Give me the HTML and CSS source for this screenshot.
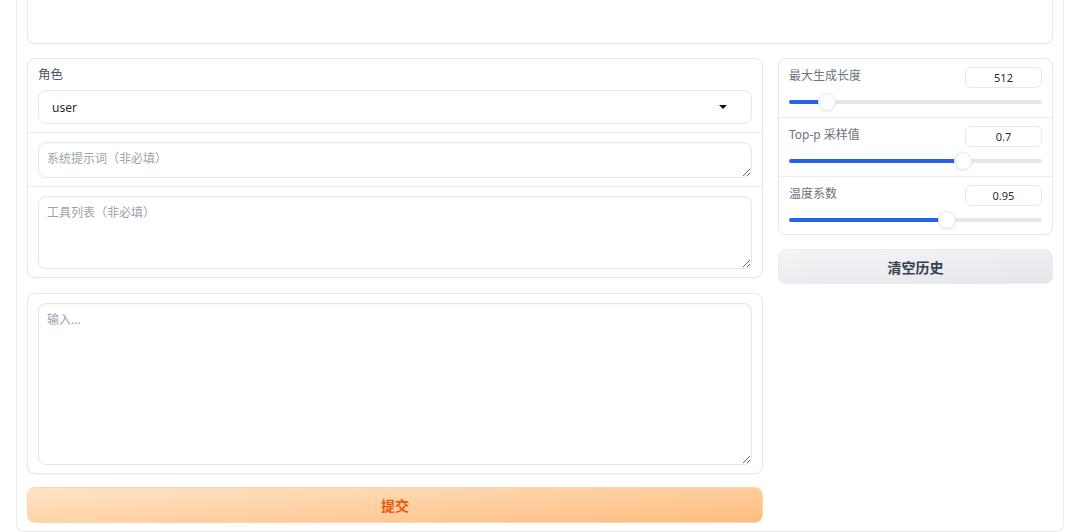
FILE: index.html
```html
<!DOCTYPE html>
<html lang="zh">
<head>
  <meta charset="UTF-8">
  <meta name="viewport" content="width=device-width, initial-scale=1.0">
  <title>Chat</title>
  <link rel="stylesheet" href="styles.css">
</head>
<body>
  <div class="app">
    <div class="chatbox"></div>

    <div class="row">
      <div class="left-col">
        <div class="card">
          <div class="section section-role">
            <span class="label">角色</span>
            <div class="select">
              <span>user</span>
              <span class="caret"></span>
            </div>
          </div>
          <div class="section">
            <textarea class="field field-system" placeholder="系统提示词（非必填）"></textarea>
          </div>
          <div class="section">
            <textarea class="field field-tools" placeholder="工具列表（非必填）"></textarea>
          </div>
        </div>

        <div class="card">
          <div class="section">
            <textarea class="field field-input" placeholder="输入..."></textarea>
          </div>
        </div>

        <button class="btn btn-submit">提交</button>
      </div>

      <div class="right-col">
        <div class="card">
          <div class="section slider-block">
            <div class="slider-head">
              <span class="label label-muted">最大生成长度</span>
              <span class="num">512</span>
            </div>
            <div class="slider">
              <div class="fill" style="width: 12.5%"></div>
              <div class="thumb" style="left: 12.5%"></div>
            </div>
          </div>
          <div class="section slider-block">
            <div class="slider-head">
              <span class="label label-muted">Top-p 采样值</span>
              <span class="num">0.7</span>
            </div>
            <div class="slider">
              <div class="fill" style="width: 70%"></div>
              <div class="thumb" style="left: 70%"></div>
            </div>
          </div>
          <div class="section slider-block">
            <div class="slider-head">
              <span class="label label-muted">温度系数</span>
              <span class="num">0.95</span>
            </div>
            <div class="slider">
              <div class="fill" style="width: 63.3%"></div>
              <div class="thumb" style="left: 63.3%"></div>
            </div>
          </div>
        </div>

        <button class="btn btn-clear">清空历史</button>
      </div>
    </div>
  </div>
</body>
</html>
```

FILE: styles.css
```css
* {
  box-sizing: border-box;
}

body {
  margin: 0;
  background-color: #fff;
  font-family: "Noto Sans", "Noto Sans CJK SC", sans-serif;
  color: #374151;
}

.app {
  margin: 0 16px;
  height: 532px;
  padding: 0 10px;
  border: 1px solid #ececec;
  border-top: none;
  border-radius: 0 0 8px 8px;
}

.chatbox {
  height: 44px;
  border: 1px solid #e8e8e8;
  border-top: none;
  border-radius: 0 0 8px 8px;
  box-shadow: 0 1px 2px rgba(0, 0, 0, 0.04);
}

.row {
  display: grid;
  grid-template-columns: 736px 275px;
  gap: 15px;
  margin-top: 14px;
}

.left-col,
.right-col {
  display: flex;
  flex-direction: column;
}

.left-col {
  gap: 15px;
}

.right-col {
  gap: 14px;
}

.card {
  border: 1px solid #e8e8e8;
  border-radius: 8px;
  background-color: #fff;
  box-shadow: 0 1px 2px rgba(0, 0, 0, 0.04);
}

.section {
  padding: 9px 10px 8px;
  border-top: 1px solid #ececec;
  display: flex;
  flex-direction: column;
}

.section:first-child {
  border-top: none;
}

.label {
  font-size: 12.5px;
  color: #4b5563;
  line-height: 18px;
}

.label-muted {
  font-size: 12px;
  color: #6b7280;
}

.section-role {
  padding-top: 7px;
  gap: 6px;
}

.select {
  height: 34px;
  border: 1px solid #e8e8e8;
  border-radius: 8px;
  display: flex;
  align-items: center;
  justify-content: space-between;
  padding: 0 24px 0 13px;
  font-size: 12px;
  color: #1f2937;
  box-shadow: inset 0 1px 2px rgba(0, 0, 0, 0.03);
}

.caret {
  width: 0;
  height: 0;
  border-left: 4px solid transparent;
  border-right: 4px solid transparent;
  border-top: 4px solid #111;
}

.field {
  display: block;
  width: 100%;
  border: 1px solid #e5e7eb;
  border-radius: 8px;
  padding: 7px 8px;
  font-family: "Noto Sans", "Noto Sans CJK SC", sans-serif;
  font-size: 12px;
  line-height: 18px;
  color: #374151;
  resize: vertical;
  outline: none;
  box-shadow: inset 0 1px 2px rgba(0, 0, 0, 0.04);
}

.field::placeholder {
  color: #9ca3af;
}

.field-system {
  height: 36px;
}

.field-tools {
  height: 73px;
}

.field-input {
  height: 162px;
}

.slider-block {
  height: 58px;
  padding: 8px 10px 0;
}

.slider-block + .slider-block {
  height: 59px;
}

.slider-block:last-child {
  height: 58px;
}

.slider-head {
  display: flex;
  justify-content: space-between;
  align-items: flex-start;
}

.num {
  width: 77px;
  height: 21px;
  border: 1px solid #e8e8e8;
  border-radius: 6px;
  font-size: 11px;
  line-height: 19px;
  text-align: center;
  color: #1f2937;
}

.slider {
  position: relative;
  height: 4px;
  margin: 12px 9px 0;
  border-radius: 2px;
  background-color: #e5e7eb;
  box-shadow: -9px 0 0 #e5e7eb, 9px 0 0 #e5e7eb;
}

.slider .fill {
  position: absolute;
  left: -9px;
  top: 0;
  height: 4px;
  border-radius: 2px 0 0 2px;
  background-color: #2563eb;
  padding-left: 9px;
  box-sizing: content-box;
}

.slider .thumb {
  position: absolute;
  top: 2px;
  width: 18px;
  height: 18px;
  margin: -9px 0 0 -9px;
  border-radius: 50%;
  background-color: #fff;
  border: 1px solid #e5e7eb;
  box-shadow: 0 1px 2px rgba(0, 0, 0, 0.08);
}

.btn {
  border: none;
  border-radius: 8px;
  font-family: "Noto Sans", "Noto Sans CJK SC", sans-serif;
  font-size: 14px;
  font-weight: 700;
  cursor: pointer;
}

.btn-submit {
  height: 36px;
  margin-top: -2px;
  color: #ea580c;
  background: linear-gradient(176deg, #ffe4c6, #fdbd7f);
  border: 1px solid #fed7aa;
}

.btn-clear {
  height: 35px;
  color: #374151;
  background: linear-gradient(175deg, #f3f4f6, #e5e7eb);
  border: 1px solid #ececec;
}
```
